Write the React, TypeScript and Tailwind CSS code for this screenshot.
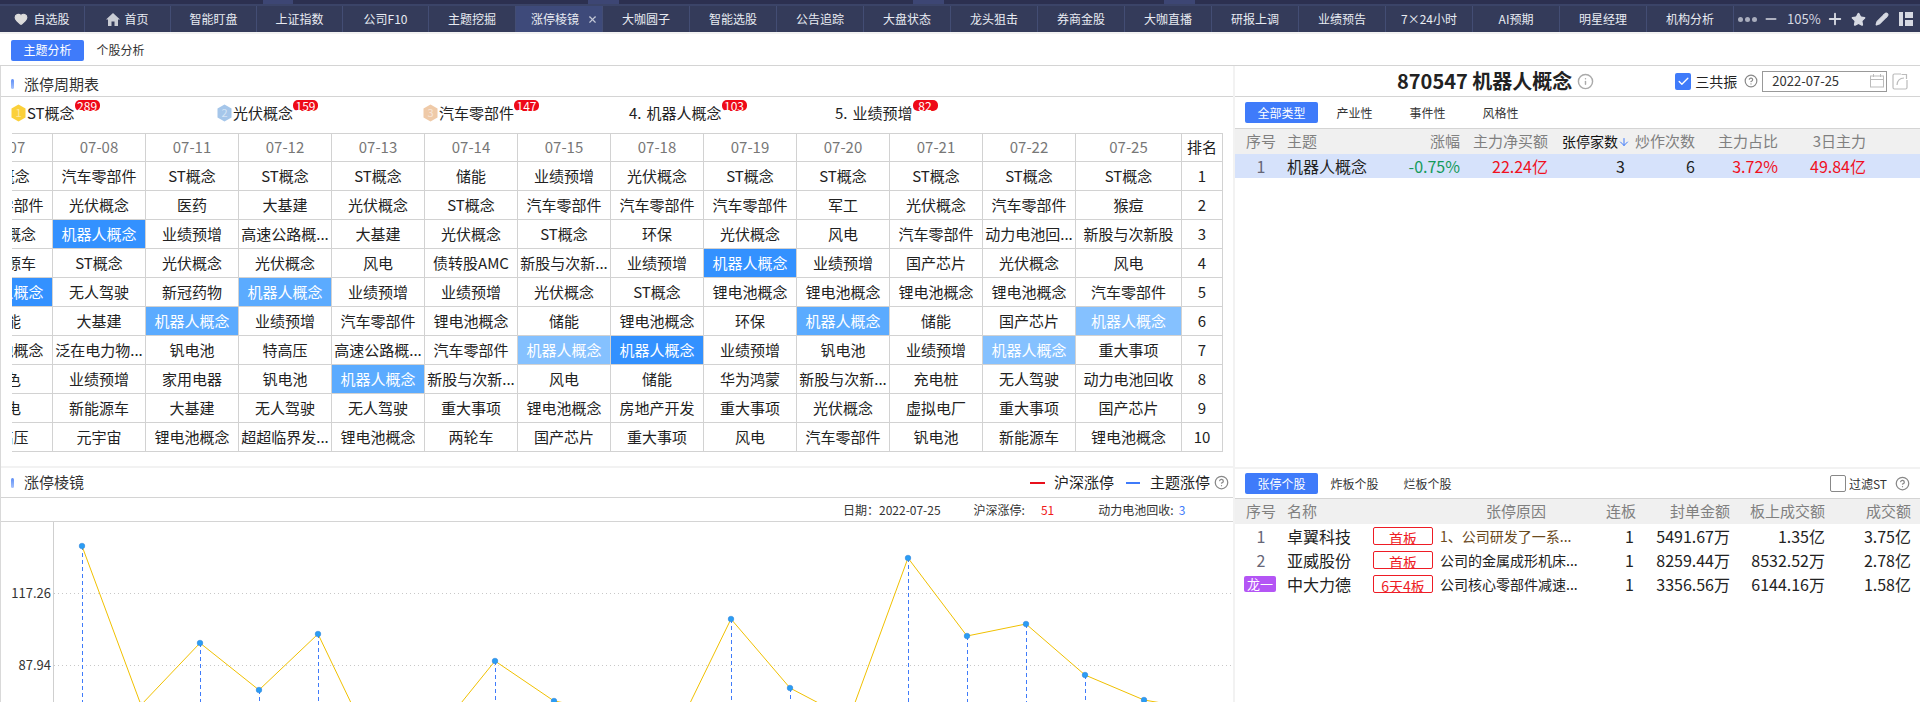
import React from "react";
import { Heart, Minus, Plus, Star, Pencil, Check, X, CircleHelp, Info, ArrowDown } from "lucide-react";

const tabs = ["自选股","首页","智能盯盘","上证指数","公司F10","主题挖掘","涨停棱镜","大咖圆子","智能选股","公告追踪","大盘状态","龙头狙击","券商金股","大咖直播","研报上调","业绩预告","7×24小时","AI预期","明星经理","机构分析"];
const tabW = ["w-[85px]","w-[86px]","w-[86px]","w-[86px]","w-[86px]","w-[87px]"];

const dates = ["07-07","07-08","07-11","07-12","07-13","07-14","07-15","07-18","07-19","07-20","07-21","07-22","07-25"];
const R = "机器人概念";
type C = string | [string, string];
const S = "bg-[#3391ff]", M = "bg-[#5babff]", L = "bg-[#85c1ff]";
const rows: C[][] = [
  ["ST概念","汽车零部件","ST概念","ST概念","ST概念","储能","业绩预增","光伏概念","ST概念","ST概念","ST概念","ST概念","ST概念"],
  ["汽车零部件","光伏概念","医药","大基建","光伏概念","ST概念","汽车零部件","汽车零部件","汽车零部件","军工","光伏概念","汽车零部件","猴痘"],
  ["光伏概念",[R,S],"业绩预增","高速公路概...","大基建","光伏概念","ST概念","环保","光伏概念","风电","汽车零部件","动力电池回...","新股与次新股"],
  ["新能源车","ST概念","光伏概念","光伏概念","风电","债转股AMC","新股与次新...","业绩预增",[R,S],"业绩预增","国产芯片","光伏概念","风电"],
  [[R,S],"无人驾驶","新冠药物",[R,M],"业绩预增","业绩预增","光伏概念","ST概念","锂电池概念","锂电池概念","锂电池概念","锂电池概念","汽车零部件"],
  ["储能","大基建",[R,M],"业绩预增","汽车零部件","锂电池概念","储能","锂电池概念","环保",[R,M],"储能","国产芯片",[R,L]],
  ["锂电池概念","泛在电力物...","钒电池","特高压","高速公路概...","汽车零部件",[R,L],[R,S],"业绩预增","钒电池","业绩预增",[R,L],"重大事项"],
  ["有色","业绩预增","家用电器","钒电池",[R,M],"新股与次新...","风电","储能","华为鸿蒙","新股与次新...","充电桩","无人驾驶","动力电池回收"],
  ["风电","新能源车","大基建","无人驾驶","无人驾驶","重大事项","锂电池概念","房地产开发","重大事项","光伏概念","虚拟电厂","重大事项","国产芯片"],
  ["特高压","元宇宙","锂电池概念","超超临界发...","锂电池概念","两轮车","国产芯片","重大事项","风电","汽车零部件","钒电池","新能源车","锂电池概念"],
];

const ranks = [
  { n: "1", name: "ST概念", c: 289, color: "#fbd03a" },
  { n: "2", name: "光伏概念", c: 159, color: "#a5c6ea" },
  { n: "3", name: "汽车零部件", c: 147, color: "#efcaa8" },
  { n: "4", name: "机器人概念", c: 103 },
  { n: "5", name: "业绩预增", c: 82 },
];

const points: [number, number][] = [[82,545],[141,704],[200,642],[259,689],[318,633],[377,756],[436,733],[495,660],[554,700],[613,711],[672,739],[731,618],[790,687],[849,718],[908,557],[967,635],[1026,623],[1085,674],[1144,699],[1203,709]];

const stocks = [
  { i: "1", name: "卓翼科技", b: "首板", r: "1、公司研发了一系...", rc: "text-[#6b4a1e]", a: "5491.67万", b2: "1.35亿", c: "3.75亿" },
  { i: "2", name: "亚威股份", b: "首板", r: "公司的金属成形机床...", rc: "text-[#222]", a: "8259.44万", b2: "8532.52万", c: "2.78亿" },
  { i: "", name: "中大力德", b: "6天4板", r: "公司核心零部件减速...", rc: "text-[#222]", a: "3356.56万", b2: "6144.16万", c: "1.58亿" },
];

function Accent() {
  return <span className="w-[3px] h-[10px] rounded-sm bg-gradient-to-b from-[#5b8cf6] to-[#a9c3fb]" />;
}

function Hex({ n, color }: { n: string; color: string }) {
  return (
    <svg width="15" height="18" viewBox="0 0 15 18" className="shrink-0">
      <polygon points="7.5,0.5 14.5,4.5 14.5,13.5 7.5,17.5 0.5,13.5 0.5,4.5" fill={color} />
      <text x="7.5" y="13" textAnchor="middle" fontSize="11" fill="#ffffff" fillOpacity="0.55">{n}</text>
    </svg>
  );
}

function Tabs({ items }: { items: string[] }) {
  return (
    <div className="flex items-center text-[12px] text-[#333]">
      {items.map((t, i) =>
        i === 0 ? (
          <div key={t} className="w-[73px] h-[21px] flex items-center justify-center rounded-[2px] bg-[#3f7bfa] text-white">{t}</div>
        ) : (
          <div key={t} className="w-[73px] text-center">{t}</div>
        )
      )}
    </div>
  );
}

export default function App() {
  return (
    <div className="w-[1920px] h-[702px] overflow-hidden flex flex-col bg-[#f2f2f2] text-[#222] font-['Noto_Sans_CJK_SC','Microsoft_YaHei',sans-serif]">
      {/* top strip */}
      <div className="h-[4px] flex bg-[#2c3050]">
        <div className="w-[263px]" />
        <div className="w-[30px] bg-[#3d4674]" />
        <div className="w-[295px]" />
        <div className="w-[31px] bg-[#3d4674]" />
        <div className="w-[294px]" />
        <div className="w-[31px] bg-[#3d4674]" />
        <div className="w-[220px]" />
        <div className="w-[31px] bg-[#3d4674]" />
      </div>
      {/* tab bar */}
      <div className="h-[28px] flex bg-[#343b5a] border-t-2 border-[#3b4468] text-[12px] text-[#e8ebf2]">
        {tabs.map((t, i) => (
          <div
            key={t}
            className={`${tabW[i] ?? "w-[87px]"} shrink-0 flex items-center justify-center border-r border-[#434d74] relative ${i === 6 ? "bg-[#3e4a7a]" : ""}`}
          >
            {i === 0 && <Heart size={14} fill="#dcdcdc" stroke="#dcdcdc" className="mr-[5px]" />}
            {i === 1 && (
              <svg width="14" height="13" viewBox="0 0 14 13" className="mr-[4px]" fill="#c9ccd4">
                <path d="M7 0L14 6.5H12V13H8.5V8.5H5.5V13H2V6.5H0Z" />
              </svg>
            )}
            <span className={i === 6 ? "mr-[8px]" : ""}>{t}</span>
            {i === 6 && <X size={11} strokeWidth={2.5} className="absolute right-[4px] top-[8px] text-[#c3c8d6]" />}
          </div>
        ))}
        <div className="flex-1 flex items-center text-[#d6d9e2] pl-[4px]">
          <span className="flex gap-[2px]">
            <span className="w-[5px] h-[5px] rounded-full bg-[#a9adbd]" />
            <span className="w-[5px] h-[5px] rounded-full bg-[#a9adbd]" />
            <span className="w-[5px] h-[5px] rounded-full bg-[#a9adbd]" />
          </span>
          <Minus size={16} strokeWidth={2.5} className="ml-[6px]" />
          <span className="ml-[8px] text-[13px]">105%</span>
          <Plus size={18} strokeWidth={2.5} className="ml-[5px]" />
          <Star size={15} fill="#d6d9e2" className="ml-[7px]" />
          <Pencil size={14} fill="#d6d9e2" className="ml-[9px]" />
          <svg width="14" height="14" viewBox="0 0 14 14" className="ml-[10px]">
            <rect x="0" y="0" width="4" height="14" fill="#d6d9e2" />
            <rect x="6" y="0" width="8" height="6" fill="#d6d9e2" />
            <rect x="6" y="8" width="8" height="6" fill="#d6d9e2" />
          </svg>
        </div>
      </div>
      <div className="h-[2px]" />
      {/* sub tabs */}
      <div className="h-[32px] bg-white border-b border-[#d4d4d4] pl-[11px] flex items-center pt-[1px]">
        <Tabs items={["主题分析","个股分析"]} />
      </div>
      {/* main */}
      <div className="flex-1 flex min-h-0">
        {/* left */}
        <div className="w-[1233px] flex flex-col border-l border-[#d9d9d9] min-h-0">
          <div className="h-[400px] bg-white flex flex-col">
            <div className="h-[31px] border-b border-[#d4d4d4] flex items-center pl-[10px] pt-[6px] text-[15px] text-[#333] shrink-0">
              <Accent />
              <span className="ml-[10px]">涨停周期表</span>
            </div>
            <div className="h-[36px] pl-[10px] flex shrink-0">
              {ranks.map((r) => (
                <div key={r.n} className="w-[206px] flex items-center text-[15px] pb-[4px]">
                  {r.color ? <Hex n={r.n} color={r.color} /> : <span className="mr-[4px]">{r.n}.</span>}
                  <span className="ml-[1px] relative">
                    {r.name}
                    <span className="absolute left-full top-[-2px] h-[11px] min-w-[25px] px-[2px] rounded-[5px] bg-[#ee0a18] text-white text-[12px] leading-[11px] text-center">{r.c}</span>
                  </span>
                </div>
              ))}
            </div>
            <div className="ml-[11px] w-[1212px] overflow-hidden">
              <table className="table-fixed border-separate border-spacing-0 -ml-[52px] w-[1263px] text-[15px]">
                <colgroup>
                  {dates.slice(0, 12).map((d) => <col key={d} className="w-[93px]" />)}
                  <col className="w-[106px]" />
                  <col className="w-[41px]" />
                </colgroup>
                <thead>
                  <tr className="h-[29px]">
                    {dates.map((d) => (
                      <th key={d} className="font-normal text-[#777] border-t border-r border-b border-[#d2d2d2] p-0">{d}</th>
                    ))}
                    <th className="font-normal text-[#222] border-t border-r border-b border-[#d2d2d2] p-0">排名</th>
                  </tr>
                </thead>
                <tbody>
                  {rows.map((row, i) => (
                    <tr key={i} className="h-[29px]">
                      {row.map((c, j) => {
                        const text = typeof c === "string" ? c : c[0];
                        const bg = typeof c === "string" ? "" : `${c[1]} text-white`;
                        return (
                          <td key={j} className={`p-0 text-center whitespace-nowrap overflow-hidden border-r border-b border-[#d2d2d2] ${bg}`}>{text}</td>
                        );
                      })}
                      <td className="p-0 text-center border-r border-b border-[#d2d2d2]">{i + 1}</td>
                    </tr>
                  ))}
                </tbody>
              </table>
            </div>
          </div>
          <div className="h-[2px]" />
          {/* prism */}
          <div className="flex-1 bg-white flex flex-col min-h-0">
            <div className="h-[30px] shrink-0 border-b border-[#d4d4d4] flex items-center pl-[10px] relative">
              <Accent />
              <span className="ml-[10px] text-[15px] text-[#333]">涨停棱镜</span>
              <div className="ml-auto flex items-center text-[15px] pr-[4px]">
                <span className="w-[15px] h-[2px] bg-[#e8101c]" />
                <span className="ml-[9px]">沪深涨停</span>
                <span className="ml-[12px] w-[14px] h-[2px] bg-[#3f7bfa]" />
                <span className="ml-[10px]">主题涨停</span>
                <CircleHelp size={15} className="ml-[4px] text-[#888]" />
              </div>
            </div>
            <div className="h-[24px] shrink-0 border-b border-[#d4d4d4] flex items-center text-[12px] text-[#333] pl-[842px]">
              <span>日期：2022-07-25</span>
              <span className="ml-[33px]">沪深涨停:</span>
              <span className="ml-[16px] text-[#f01a1a]">51</span>
              <span className="ml-[44px]">动力电池回收:</span>
              <span className="ml-[5px] text-[#3f7bfa]">3</span>
            </div>
            <svg width="1232" height="181" viewBox="1 521 1232 181" className="block shrink-0">
              <line x1="53.5" y1="521" x2="53.5" y2="702" stroke="#cfcfcf" />
              <line x1="54" y1="592.5" x2="1233" y2="592.5" stroke="#c8c8c8" strokeDasharray="1 3" />
              <line x1="54" y1="664.5" x2="1233" y2="664.5" stroke="#c8c8c8" strokeDasharray="1 3" />
              <text x="51" y="597" textAnchor="end" fontSize="13" fill="#333">117.26</text>
              <text x="51" y="669" textAnchor="end" fontSize="13" fill="#333">87.94</text>
              {points.map(([x, y]) => (
                <line key={x} x1={x + 0.5} y1={y} x2={x + 0.5} y2="702" stroke="#3f7bfa" strokeDasharray="4 3" />
              ))}
              <polyline points={points.map((p) => p.join(",")).join(" ")} fill="none" stroke="#f0c000" strokeWidth="1" />
              {points.map(([x, y]) => (
                <circle key={x} cx={x} cy={y} r="2.8" fill="#2a9df4" stroke="#2f7fd6" strokeWidth="0.5" />
              ))}
            </svg>
          </div>
        </div>
        <div className="w-[2px] shrink-0" />
        {/* right */}
        <div className="flex-1 flex flex-col min-w-0">
          <div className="h-[401px] shrink-0 bg-white flex flex-col">
            <div className="h-[31px] shrink-0 border-b border-[#d4d4d4] flex items-center relative">
              <span className="ml-[162px] text-[20px] font-bold text-[#222]">870547 机器人概念</span>
              <Info size={17} className="ml-[5px] text-[#aaa]" />
              <span className="ml-[81px] w-[16px] h-[17px] rounded-[2px] bg-[#3f7bfa] flex items-center justify-center">
                <Check size={13} strokeWidth={2.5} className="text-white" />
              </span>
              <span className="ml-[4px] text-[14px]">三共振</span>
              <CircleHelp size={14} className="ml-[7px] text-[#888]" />
              <div className="ml-[4px] w-[125px] h-[21px] border border-[#999] flex items-center pl-[9px] text-[13px] text-[#333] relative">
                2022-07-25
                <svg width="14" height="14" viewBox="0 0 14 14" className="absolute right-[2px] top-[2px]" fill="none" stroke="#bbb">
                  <rect x="0.5" y="2" width="13" height="11" />
                  <line x1="0.5" y1="5.5" x2="13.5" y2="5.5" />
                  <line x1="3.5" y1="0" x2="3.5" y2="3" />
                  <line x1="10.5" y1="0" x2="10.5" y2="3" />
                </svg>
              </div>
              <svg width="16" height="18" viewBox="0 0 16 18" className="ml-[5px]" fill="none" stroke="#bbb" strokeWidth="1.2">
                <path d="M9 2H2.5Q1 2 1 3.5V15.5Q1 17 2.5 17H13.5Q15 17 15 15.5V8" />
                <path d="M5 13C5 8.5 8 6 12 6M9.5 2.5L14.5 2.5L14.5 7" />
              </svg>
            </div>
            <div className="h-[32px] shrink-0 border-b border-[#d4d4d4] flex items-center pl-[10px]">
              <Tabs items={["全部类型","产业性","事件性","风格性"]} />
            </div>
            <div className="h-[25px] shrink-0 bg-[#f0f0f0] pl-[11px] grid grid-cols-[30px_104px_80px_88px_77px_70px_83px_88px] items-center text-[15px] text-[#808080]">
              <span>序号</span>
              <span className="pl-[11px]">主题</span>
              <span className="text-right">涨幅</span>
              <span className="text-right">主力净买额</span>
              <span className="flex items-center justify-end text-[14px] text-[#111] -mr-[5px]">张停家数<ArrowDown size={12} className="text-[#3f7bfa]" /></span>
              <span className="text-right">炒作次数</span>
              <span className="text-right">主力占比</span>
              <span className="text-right">3日主力</span>
            </div>
            <div className="h-[24px] shrink-0 bg-[#d6e2fb] pl-[11px] grid grid-cols-[30px_104px_80px_88px_77px_70px_83px_88px] items-center text-[16px]">
              <span className="text-center text-[#667]">1</span>
              <span className="pl-[11px] whitespace-nowrap">机器人概念</span>
              <span className="text-right text-[#149a5a]">-0.75%</span>
              <span className="text-right text-[#f0101e]">22.24亿</span>
              <span className="text-right">3</span>
              <span className="text-right">6</span>
              <span className="text-right text-[#f0101e]">3.72%</span>
              <span className="text-right text-[#f0101e]">49.84亿</span>
            </div>
          </div>
          <div className="h-[2px] shrink-0" />
          <div className="flex-1 bg-white flex flex-col">
            <div className="h-[30px] shrink-0 border-b border-[#d4d4d4] flex items-center pl-[10px] relative">
              <Tabs items={["张停个股","炸板个股","烂板个股"]} />
              <span className="ml-auto w-[16px] h-[17px] rounded-[2px] border border-[#888] bg-white" />
              <span className="ml-[3px] text-[12px] text-[#333]">过滤ST</span>
              <CircleHelp size={15} className="ml-[8px] mr-[10px] text-[#888]" />
            </div>
            <div className="h-[25px] shrink-0 bg-[#f0f0f0] pl-[11px] grid grid-cols-[30px_97px_67px_152px_44px_94px_95px_86px] items-center text-[15px] text-[#808080]">
              <span>序号</span>
              <span className="pl-[11px]">名称</span>
              <span className="col-span-2 pl-[67px] text-center whitespace-nowrap">张停原因</span>
              <span className="text-right">连板</span>
              <span className="text-right">封单金额</span>
              <span className="text-right">板上成交额</span>
              <span className="text-right">成交额</span>
            </div>
            {stocks.map((s) => (
              <div key={s.name} className="h-[24px] shrink-0 pl-[11px] grid grid-cols-[30px_97px_67px_152px_44px_94px_95px_86px] items-center text-[16px]">
                {s.i ? (
                  <span className="text-center text-[#667]">{s.i}</span>
                ) : (
                  <span className="-ml-[2px] w-[32px] h-[16px] rounded-[2px] bg-[#b455f5] text-white text-[13px] leading-[16px] text-center">龙一</span>
                )}
                <span className="pl-[11px]">{s.name}</span>
                <span className="w-[60px] h-[18px] border border-[#ee1c25] rounded-[2px] overflow-hidden text-center text-[#ee1c25] text-[14px] leading-[20px]">{s.b}</span>
                <span className={`text-[14px] whitespace-nowrap ${s.rc}`}>{s.r}</span>
                <span className="text-right pr-[2px]">1</span>
                <span className="text-right">{s.a}</span>
                <span className="text-right">{s.b2}</span>
                <span className="text-right">{s.c}</span>
              </div>
            ))}
          </div>
        </div>
      </div>
    </div>
  );
}
